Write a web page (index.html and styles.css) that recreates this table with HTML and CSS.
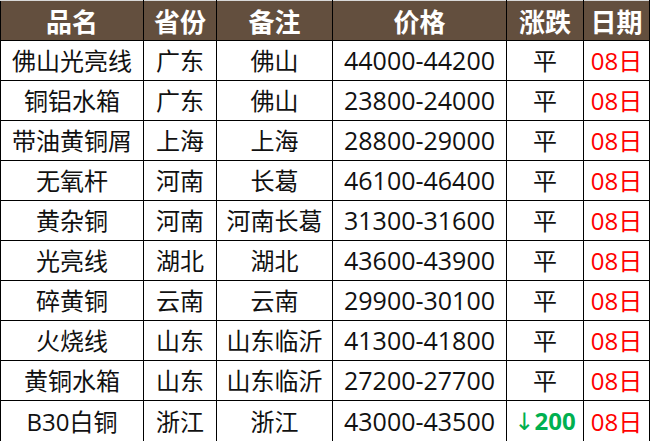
FILE: index.html
```html
<!DOCTYPE html>
<html lang="zh-CN">
<head>
<meta charset="utf-8">
<title>价格表</title>
<link rel="stylesheet" href="styles.css">
</head>
<body>
<table class="price-table">
  <colgroup>
    <col class="c-name"><col class="c-prov"><col class="c-note"><col class="c-price"><col class="c-chg"><col class="c-date">
  </colgroup>
  <thead>
    <tr><th>品名</th><th>省份</th><th>备注</th><th>价格</th><th>涨跌</th><th>日期</th></tr>
  </thead>
  <tbody>
    <tr><td>佛山光亮线</td><td>广东</td><td>佛山</td><td class="price">44000-44200</td><td>平</td><td class="date">08日</td></tr>
    <tr><td>铜铝水箱</td><td>广东</td><td>佛山</td><td class="price">23800-24000</td><td>平</td><td class="date">08日</td></tr>
    <tr><td>带油黄铜屑</td><td>上海</td><td>上海</td><td class="price">28800-29000</td><td>平</td><td class="date">08日</td></tr>
    <tr><td>无氧杆</td><td>河南</td><td>长葛</td><td class="price">46100-46400</td><td>平</td><td class="date">08日</td></tr>
    <tr><td>黄杂铜</td><td>河南</td><td>河南长葛</td><td class="price">31300-31600</td><td>平</td><td class="date">08日</td></tr>
    <tr><td>光亮线</td><td>湖北</td><td>湖北</td><td class="price">43600-43900</td><td>平</td><td class="date">08日</td></tr>
    <tr><td>碎黄铜</td><td>云南</td><td>云南</td><td class="price">29900-30100</td><td>平</td><td class="date">08日</td></tr>
    <tr><td>火烧线</td><td>山东</td><td>山东临沂</td><td class="price">41300-41800</td><td>平</td><td class="date">08日</td></tr>
    <tr><td>黄铜水箱</td><td>山东</td><td>山东临沂</td><td class="price">27200-27700</td><td>平</td><td class="date">08日</td></tr>
    <tr class="last"><td>B30白铜</td><td>浙江</td><td>浙江</td><td class="price">43000-43500</td><td class="down"><span class="arrow">↓</span>200</td><td class="date">08日</td></tr>
  </tbody>
</table>
</body>
</html>
```
FILE: styles.css
```css
html, body {
  margin: 0;
  padding: 0;
  background: #ffffff;
}
.price-table {
  border-collapse: collapse;
  table-layout: fixed;
  width: 649px;
  font-family: "Open Sans", "Noto Sans CJK SC", sans-serif;
  color: #111111;
}
.c-name { width: 143px; }
.c-prov { width: 73px; }
.c-note { width: 116px; }
.c-price { width: 174px; }
.c-chg { width: 77px; }
.c-date { width: 66px; }
.price-table th,
.price-table td {
  border: 1px solid #000000;
  padding: 0;
  text-align: center;
  white-space: nowrap;
  overflow: hidden;
}
.price-table th {
  height: 39px;
  background: #634f3e;
  color: #ffffff;
  font-size: 26px;
  font-weight: bold;
  font-family: "Noto Sans CJK SC", sans-serif;
  line-height: 39px;
  border-top-color: #d9d9d9;
}
.price-table td {
  height: 39px;
  font-size: 24px;
  line-height: 39px;
}
.price-table td.price {
  font-size: 25px;
}
.price-table tr.last td {
  height: 38px;
}
.price-table td.date {
  color: #ff0000;
}
.price-table td.down {
  color: #00b050;
  font-weight: bold;
}
.arrow {
  font-weight: normal;
  font-family: "DejaVu Sans", sans-serif;
}
```
